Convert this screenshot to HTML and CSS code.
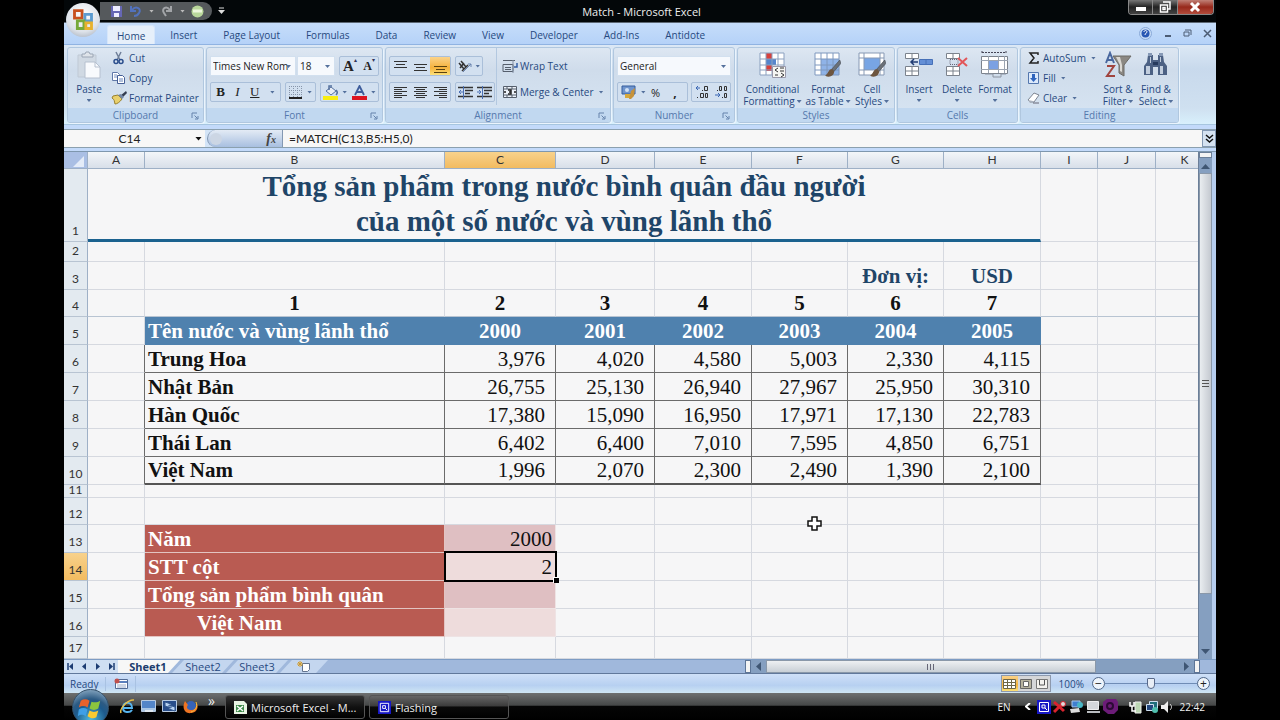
FILE: index.html
```html
<!DOCTYPE html>
<html lang="vi">
<head>
<meta charset="utf-8">
<title>Match - Microsoft Excel</title>
<link rel="stylesheet" href="styles.css">
</head>
<body>
<svg class="defs" aria-hidden="true">
  <defs>
    <symbol id="launch" viewBox="0 0 8 8"><path d="M1 6V1h5M3.500 3.500l3 3M7 4v3H4" fill="none" stroke="#6482ab"/></symbol>
    <symbol id="brush" viewBox="0 0 14 16"><path d="M13 0L6 8l2 2 6-7z" fill="#6b7078" stroke="#4b4f57" stroke-width=".6"/><path d="M6 8c-3 0-3 4-6 6 4 2 8 0 8-4z" fill="#6d553f"/></symbol>
    <symbol id="flash" viewBox="0 0 14 14"><path d="M0 0h14v14H0z" fill="#1717c4"/><path d="M2.500 2.500h9v9h-9zM5 5h3v3H5zM8 8l2 2" fill="none" stroke="#fff"/></symbol>
  </defs>
</svg>
<div class="app">
  <header class="titlebar">
    <button class="office" aria-label="Office Button"><svg viewBox="0 0 36 36"><g fill="none" stroke-width="3"><path d="M9 8h8v8H9z" stroke="#c8511f"/><path d="M20 12h7v7h-7z" stroke="#5b9bd0"/><path d="M12 19h7v8h-7z" stroke="#76a93a"/><path d="M21 21h6v6h-6z" stroke="#e7b12d"/></g></svg></button>
    <div class="qat">
      <button aria-label="Save"><svg width="13" height="13"><path d="M1 1h11v11H1z" fill="#6667b4"/><path d="M3 1h7v5H3zM4 8h5v4H4z" fill="#eef"/></svg></button>
      <button aria-label="Undo"><svg width="14" height="13"><path d="M2 1v5h5M3 5c4-5 10-1 7 3-1 2-3 3-5 3" fill="none" stroke="#5272bd" stroke-width="2"/></svg></button>
      <i class="caret pale"></i>
      <button aria-label="Redo"><svg width="14" height="13"><path d="M11 1v5H6M10 5C6 0 1 4 4 8l2 3" fill="none" stroke="#a2a5a8" stroke-width="2"/></svg></button>
      <i class="caret pale"></i>
      <button aria-label="Record"><svg width="13" height="13"><circle cx="6.500" cy="6.500" r="6" fill="#b9d79b"/><path d="M2 6h9" stroke="#edf7dc" stroke-width="3"/></svg></button>
    </div>
    <button class="more" aria-label="Customize"><svg width="7" height="8"><path d="M1 1h5" stroke="#ddd"/><path d="M0 3h7L3.500 7z" fill="#ddd"/></svg></button>
    <h1>Match - Microsoft Excel</h1>
    <div class="winbtns">
      <button aria-label="Minimize"><svg width="12" height="12"><path d="M1 6h10v4H1z" fill="#fff"/></svg></button>
      <button aria-label="Restore"><svg width="12" height="12"><path d="M4 1h7v7H9M1.500 4h7v7h-7zM4 6.500h2v2H4z" fill="none" stroke="#fff" stroke-width="1.500"/></svg></button>
      <button class="close" aria-label="Close"><svg width="12" height="12"><path d="M2 2l8 8M10 2l-8 8" stroke="#fff" stroke-width="3"/></svg></button>
    </div>
  </header>

  <nav class="tabs">
    <button class="tab on">Home</button><button class="tab">Insert</button><button class="tab">Page Layout</button><button class="tab">Formulas</button><button class="tab">Data</button><button class="tab">Review</button><button class="tab">View</button><button class="tab">Developer</button><button class="tab">Add-Ins</button><button class="tab">Antidote</button>
    <span class="docbtns">
      <button aria-label="Help"><svg width="13" height="13"><circle cx="6.500" cy="6.500" r="6" fill="#c9ddf6" stroke="#89a9d8"/><circle cx="6.500" cy="6.500" r="4" fill="#2a58b4"/><path d="M5 5c0-2 3-2 3 0 0 1-2 1-2 3" fill="none" stroke="#fff"/></svg></button>
      <button aria-label="Minimize workbook"><svg width="9" height="9"><path d="M2 7h6" stroke="#4c5c74" stroke-width="2"/></svg></button>
      <button aria-label="Restore workbook"><svg width="9" height="9"><path d="M2 1h6v5M1 3h5v4H1z" fill="none" stroke="#4c5c74"/></svg></button>
      <button aria-label="Close workbook"><svg width="9" height="9"><path d="M1 1l7 7M8 1L1 8" stroke="#4c5c74" stroke-width="1.500"/></svg></button>
    </span>
  </nav>

  <div class="ribbon">
    <section class="group clipboard">
      <div class="gbody">
        <button class="big"><svg width="28" height="28"><path d="M3 4h18v22H3z" fill="#d0d9e3" stroke="#bfc9d5"/><path d="M7 3h3l1-2h3l1 2h3v3H7z" fill="#dfe4ea" stroke="#9ba6b5"/><path d="M10 11h10l5 5v11H10z" fill="#f8fafd" stroke="#b6c0cf"/><path d="M20 11v5h5" fill="none" stroke="#b6c0cf"/></svg><span>Paste</span><i class="caret"></i></button>
        <div class="stack">
          <button class="small"><svg width="16" height="14"><path d="M5 1l4 8M10 1L6 9" stroke="#6f7f99" stroke-width="1.500"/><circle cx="5" cy="10.500" r="2" fill="none" stroke="#2c4f8d" stroke-width="1.500"/><circle cx="10" cy="10.500" r="2" fill="none" stroke="#2c4f8d" stroke-width="1.500"/></svg>Cut</button>
          <button class="small"><svg width="16" height="14"><path d="M1.500 1.500h5l2 2v6h-7z" fill="#fff" stroke="#6078a8"/><path d="M3 4h3M3 6h3" stroke="#7c94c0"/><path d="M6.500 4.500h5l2 2v6h-7z" fill="#fff" stroke="#455f96"/><path d="M8 8h4M8 10h4" stroke="#6683b8"/></svg>Copy</button>
          <button class="small"><svg width="16" height="14"><path d="M15 0L9 5l2 2 5-5z" fill="#333c50"/><path d="M2 5l5-1 4 4c-2 3-5 5-7 5-1-3 0-4-3-6z" fill="#e9d06c" stroke="#98802f"/><path d="M7 4l4 4 2-2-3-3z" fill="#7286a5"/></svg>Format Painter</button>
        </div>
      </div>
      <h2>Clipboard<svg class="launch" width="8" height="8"><use href="#launch"/></svg></h2>
    </section>

    <section class="group font">
      <div class="gbody rows">
        <div class="row">
          <span class="joined">
            <label class="combo fname"><select aria-label="Font"><option>Times New Rom</option></select><i class="caret"></i></label>
            <label class="combo fsize"><select aria-label="Font size"><option>18</option></select><i class="caret"></i></label>
          </span>
          <span class="set two"><button class="serif" aria-label="Grow font"><b class="g1">A</b><sup>▴</sup></button><button class="serif" aria-label="Shrink font"><b class="g2">A</b><sup>▾</sup></button></span>
        </div>
        <div class="row">
          <span class="set biu"><button class="serif"><b>B</b></button><button class="serif"><em>I</em></button><button class="serif"><u>U</u></button><i class="caret"></i></span>
          <span class="set bord"><button aria-label="Borders"><svg width="13" height="13"><path d="M.5 0v11M4.500 0v11M8.500 0v11M12.500 0v11M0 .5h13M0 4.500h13M0 8.500h13" stroke="#8795aa" stroke-dasharray="1 1"/><path d="M0 12h13" stroke="#222" stroke-width="2"/></svg></button><i class="caret"></i></span>
          <span class="set cols"><button aria-label="Fill color"><svg width="15" height="15"><path d="M3 6l5-4 5 4-5 4z" fill="#e8edf5" stroke="#56729f"/><path d="M6 5V1h3M13 5c2 2 1 4 0 5" fill="none" stroke="#56729f" stroke-width="1.500"/><path d="M0 11h15v4H0z" fill="#f9ee11"/></svg></button><i class="caret"></i><button aria-label="Font color"><svg width="15" height="15"><path d="M3 10L7.500 1 12 10M5 7h5" fill="none" stroke="#3d5c9b" stroke-width="1.800"/><path d="M0 11h15v4H0z" fill="#dd1420"/></svg></button><i class="caret"></i></span>
        </div>
      </div>
      <h2>Font<svg class="launch" width="8" height="8"><use href="#launch"/></svg></h2>
    </section>

    <section class="group align">
      <div class="gbody">
        <div class="rows left">
          <div class="row">
            <span class="set three"><button aria-label="Top align"><svg width="13" height="14"><path d="M0 2.500h13M2 5.500h9M0 8.500h13" stroke="#333"/></svg></button><button aria-label="Middle align"><svg width="13" height="14"><path d="M0 5.500h13M2 8.500h9M0 11.500h13" stroke="#333"/></svg></button><button class="lit" aria-label="Bottom align"><svg width="13" height="14"><path d="M0 7.500h13M2 10.500h9M0 13.500h13" stroke="#5b430f"/></svg></button></span>
            <span class="set ori"><button aria-label="Orientation"><svg width="14" height="13"><path d="M1 3l5 6M3 1l5 6M2 8l4-5M4 11l6-6" stroke="#333" stroke-width="1.500"/><path d="M5 12l8-8M10 4h3v3" fill="none" stroke="#6a84af"/></svg></button><i class="caret"></i></span>
          </div>
          <div class="row">
            <span class="set three"><button aria-label="Align left"><svg width="13" height="12"><path d="M0 1.500h13M0 3.500h8M0 5.500h13M0 7.500h8M0 9.500h13M0 11.500h8" stroke="#333"/></svg></button><button aria-label="Center"><svg width="13" height="12"><path d="M0 1.500h13M2 3.500h9M0 5.500h13M2 7.500h9M0 9.500h13M2 11.500h9" stroke="#333"/></svg></button><button aria-label="Align right"><svg width="13" height="12"><path d="M0 1.500h13M5 3.500h8M0 5.500h13M5 7.500h8M0 9.500h13M5 11.500h8" stroke="#333"/></svg></button></span>
            <span class="set dent"><button aria-label="Decrease indent"><svg width="15" height="13"><path d="M0 1.500h15M7 4.500h8M7 7.500h5M0 10.500h15" stroke="#333" stroke-width="1.500"/><path d="M5 6H1M3 4L1 6l2 2M5.500 0v13" fill="none" stroke="#4b70b4"/></svg></button><button aria-label="Increase indent"><svg width="15" height="13"><path d="M0 1.500h15M7 4.500h8M7 7.500h5M0 10.500h15" stroke="#333" stroke-width="1.500"/><path d="M0 6h4M2 4l2 2-2 2M5.500 0v13" fill="none" stroke="#4b70b4"/></svg></button></span>
          </div>
        </div>
        <div class="rows right">
          <button class="small"><svg width="16" height="14"><path d="M1 1.500h12M1 5.500h10v7H1zM3 8.500h6M3 10.500h6" fill="none" stroke="#555e6c"/><path d="M11 1v13" stroke="#8390a5"/><path d="M15 4v4h-3" fill="none" stroke="#335fa8" stroke-width="1.500"/></svg>Wrap Text</button>
          <button class="small"><svg width="16" height="14"><path d="M1.500 1.500h13v11h-13zM1 4h14M1 10h14M5 1v3M10 1v3M5 10v3M10 10v3" fill="#eef3fa" stroke="#555e6c"/><path d="M2 7h2M12 7h2M6 5h3v4H6M7 7h2" fill="none" stroke="#222" stroke-width="1.500"/></svg>Merge &amp; Center<i class="caret"></i></button>
        </div>
      </div>
      <h2>Alignment<svg class="launch" width="8" height="8"><use href="#launch"/></svg></h2>
    </section>

    <section class="group number">
      <div class="gbody rows">
        <div class="row"><label class="combo fmt"><select aria-label="Number format"><option>General</option></select><i class="caret"></i></label></div>
        <div class="row">
          <span class="set cur"><button aria-label="Accounting format"><svg width="15" height="14"><path d="M1 1h13v8H1z" fill="#6f94cc" stroke="#355d9d"/><circle cx="6" cy="5" r="2" fill="#cfe0f6"/><path d="M4 9h6v4H4z" fill="#d7a93c"/><path d="M10 6l4-3-1 8-3 3H8z" fill="#c6923a"/></svg></button><i class="caret"></i><button class="pct">%</button><button class="comma">,</button></span>
          <span class="set dec"><button aria-label="Increase decimal"><svg width="14" height="14"><path d="M5 3H1M3 1L1 3l2 2" fill="none" stroke="#3a67b4"/><path d="M9.500 1.500h3v4h-3zM5.500 8.500h3v4h-3zM10.500 8.500h2v4h-2zM7 5.500h1M2 12.500h1" fill="none" stroke="#333"/></svg></button><button aria-label="Decrease decimal"><svg width="14" height="14"><path d="M1 10h5M4 8l2 2-2 2" fill="none" stroke="#3a67b4"/><path d="M5.500 1.500h2v4h-2zM10.500 1.500h2v4h-2zM10.500 8.500h2v4h-2zM3 5.500h1M8 12.500h1" fill="none" stroke="#333"/></svg></button></span>
        </div>
      </div>
      <h2>Number<svg class="launch" width="8" height="8"><use href="#launch"/></svg></h2>
    </section>

    <section class="group styles">
      <div class="gbody">
        <button class="big wide"><svg width="28" height="28"><path d="M1 2h24v22H1z" fill="#fff"/><path d="M7 2h6v6H7zM7 14h6v6H7z" fill="#d8403c"/><path d="M7 8h10v6H7z" fill="#5585cc"/><path d="M1 2h24v22H1zM1 8h24M1 14h24M1 19h24M7 2v22M13 2v22M19 2v22" fill="none" stroke="#8ba0bf"/><path d="M13.500 15.500h13v11h-13z" fill="#f6f6f3" stroke="#99a"/><path d="M19 17l-3 2 3 2M21 17h4M21 20h4M16 24h3M22 22l3 2-3 2" fill="none" stroke="#333"/></svg><span>Conditional<br>Formatting<i class="caret"></i></span></button>
        <button class="big mid"><svg width="28" height="28"><path d="M1 2h24v22H1z" fill="#fff"/><path d="M7 8h18v16H7z" fill="#8fb3e8"/><path d="M1 2h24v22H1zM1 8h24M1 14h24M1 19h24M7 2v22M13 2v22M19 2v22" fill="none" stroke="#7f98be"/><use href="#brush" x="11" y="9" width="16" height="18"/></svg><span>Format<br>as Table<i class="caret"></i></span></button>
        <button class="big"><svg width="28" height="28"><path d="M1 2h25v22H1z" fill="#fff"/><path d="M6 7h16v12H6z" fill="#78a5e4"/><path d="M1 2h25v22H1zM1 7h25M1 19h25M6 2v22M22 2v22" fill="none" stroke="#8799b4"/><use href="#brush" x="12" y="9" width="16" height="18"/></svg><span>Cell<br>Styles<i class="caret"></i></span></button>
      </div>
      <h2>Styles</h2>
    </section>

    <section class="group cells">
      <div class="gbody">
        <button class="big"><svg width="28" height="28"><path d="M.5 2.500h13v5H.5zM.5 15.500h13v9H.5zM7 2v5M7 15v9M0 20h14" fill="#fff" stroke="#7b828c"/><path d="M14.500 8.500h13v5h-13zM21 8v6" fill="#648fd6" stroke="#4670b8"/><path d="M13 11H6M9 8l-3 3 3 3" fill="none" stroke="#223d74" stroke-width="1.500"/></svg><span>Insert</span><i class="caret"></i></button>
        <button class="big"><svg width="28" height="28"><path d="M3.500 2.500h13v5h-13zM3.500 15.500h13v9h-13zM10 2v5M10 15v9M3 20h14" fill="#fff" stroke="#7b828c"/><path d="M7 8.500h8v5H7z" fill="none" stroke="#667" stroke-dasharray="1 1"/><path d="M15 7l9 8M24 7l-9 8" stroke="#e2575a" stroke-width="2"/></svg><span>Delete</span><i class="caret"></i></button>
        <button class="big"><svg width="28" height="28"><path d="M1 1.500h24M1 0v3M25 0v3" stroke="#445" stroke-dasharray="2 1"/><path d="M.5 5.500h26v17H.500z" fill="#fff" stroke="#7b828c"/><path d="M8 10h9v8H8z" fill="#7ba1e2"/><path d="M0 9.500h27M0 18.500h27M7.500 5v17M17.500 5v17M23.500 5v17" stroke="#9aa3b0"/><path d="M4 23h8v3h8v-3h5" fill="none" stroke="#8a929f"/></svg><span>Format</span><i class="caret"></i></button>
      </div>
      <h2>Cells</h2>
    </section>

    <section class="group editing">
      <div class="gbody">
        <div class="stack">
          <button class="small"><svg width="14" height="14"><path d="M11 4V2H3l4 5-4 5h8v-2" fill="none" stroke="#222" stroke-width="1.500"/></svg>AutoSum<i class="caret"></i></button>
          <button class="small"><svg width="14" height="14"><path d="M1.500 1.500h10v11h-10z" fill="#dce9fb" stroke="#5477ae"/><path d="M5 3h3v4h2l-3.500 4L3 7h2z" fill="#2f64bd"/></svg>Fill<i class="caret"></i></button>
          <button class="small"><svg width="14" height="14"><path d="M1 9l6-7 5 2-5 7H3z" fill="#fff" stroke="#7d8592"/><path d="M1 9l5 1 1 1-4 1z" fill="#aab2be"/><path d="M6 12h6" stroke="#667"/></svg>Clear<i class="caret"></i></button>
        </div>
        <button class="big"><svg width="28" height="28"><path d="M2 12L6 2l4 10M4 9h5" fill="none" stroke="#49679e" stroke-width="2"/><path d="M3 15h7l-7 10h8" fill="none" stroke="#a0443f" stroke-width="2"/><path d="M9 5h18l-7 9v11l-5-3v-8z" fill="#8b8883" stroke="#6c6a66"/><path d="M12 6h4l2 8v7l-2-1v-6z" fill="#d9d7d2"/></svg><span>Sort &amp;<br>Filter<i class="caret"></i></span></button>
        <button class="big"><svg width="28" height="28"><path d="M6 4h5v5h5V4h5l1 7 3 4v9h-9v-8h-5v8H2v-9l3-4z" fill="#4c6184"/><path d="M6 2h4v3H6zM17 2h4v3h-4z" fill="#8699b6"/><path d="M4 15h4v8H4zM18 15h3v8h-3zM8 6h1v6H8zM18 6h1v5h-1z" fill="#c2cede"/><path d="M11 11h5v3h-5z" fill="#263a5d"/></svg><span>Find &amp;<br>Select<i class="caret"></i></span></button>
      </div>
      <h2>Editing</h2>
    </section>
  </div>

  <div class="fbar">
    <span class="namebox"><input aria-label="Name box" value="C14"><i class="caret dark"></i></span>
    <span class="fxwrap"><button class="fx" aria-label="Insert function"><i class="knob"></i><em>f<small>x</small></em></button></span>
    <input class="formula" aria-label="Formula" value="=MATCH(C13,B5:H5,0)">
    <button class="expand" aria-label="Expand formula bar"><svg width="9" height="10"><path d="M1 1l3.500 3L8 1M1 5l3.500 3L8 5" fill="none" stroke="#111" stroke-width="1.500"/></svg></button>
  </div>

  <main class="work">
    <div class="sheet">
      <table>
        <colgroup><col class="ch"><col class="ca"><col class="cb"><col class="cc"><col class="cd"><col class="ce"><col class="cf"><col class="cf"><col class="ce"><col class="ca"><col class="cj"><col class="cj"></colgroup>
        <thead><tr><th class="corner"><svg width="22" height="16"><path d="M20 4v11H9z" fill="#e4ecf8"/></svg></th><th>A</th><th>B</th><th class="sel">C</th><th>D</th><th>E</th><th>F</th><th>G</th><th>H</th><th>I</th><th>J</th><th>K</th></tr></thead>
        <tbody>
          <tr class="r1"><th>1</th><td colspan="8" class="title">Tổng sản phẩm trong nước bình quân đầu người<br>của một số nước và vùng lãnh thổ</td><td></td><td></td><td></td></tr>
          <tr class="r2"><th>2</th><td></td><td></td><td></td><td></td><td></td><td></td><td></td><td></td><td></td><td></td><td></td></tr>
          <tr class="unit"><th>3</th><td></td><td></td><td></td><td></td><td></td><td></td><td>Đơn vị:</td><td>USD</td><td></td><td></td><td></td></tr>
          <tr class="idx"><th>4</th><td></td><td>1</td><td>2</td><td>3</td><td>4</td><td>5</td><td>6</td><td>7</td><td></td><td></td><td></td></tr>
          <tr class="head"><th>5</th><td></td><td class="h name">Tên nước và vùng lãnh thổ</td><td class="h">2000</td><td class="h">2001</td><td class="h">2002</td><td class="h">2003</td><td class="h">2004</td><td class="h">2005</td><td></td><td></td><td></td></tr>
          <tr><th>6</th><td class="edge"></td><td class="d name">Trung Hoa</td><td class="d">3,976</td><td class="d">4,020</td><td class="d">4,580</td><td class="d">5,003</td><td class="d">2,330</td><td class="d">4,115</td><td></td><td></td><td></td></tr>
          <tr><th>7</th><td class="edge"></td><td class="d name">Nhật Bản</td><td class="d">26,755</td><td class="d">25,130</td><td class="d">26,940</td><td class="d">27,967</td><td class="d">25,950</td><td class="d">30,310</td><td></td><td></td><td></td></tr>
          <tr><th>8</th><td class="edge"></td><td class="d name">Hàn Quốc</td><td class="d">17,380</td><td class="d">15,090</td><td class="d">16,950</td><td class="d">17,971</td><td class="d">17,130</td><td class="d">22,783</td><td></td><td></td><td></td></tr>
          <tr><th>9</th><td class="edge"></td><td class="d name">Thái Lan</td><td class="d">6,402</td><td class="d">6,400</td><td class="d">7,010</td><td class="d">7,595</td><td class="d">4,850</td><td class="d">6,751</td><td></td><td></td><td></td></tr>
          <tr class="last"><th>10</th><td class="edge"></td><td class="d name">Việt Nam</td><td class="d">1,996</td><td class="d">2,070</td><td class="d">2,300</td><td class="d">2,490</td><td class="d">1,390</td><td class="d">2,100</td><td></td><td></td><td></td></tr>
          <tr class="r11"><th>11</th><td></td><td></td><td></td><td></td><td></td><td></td><td></td><td></td><td></td><td></td><td></td></tr>
          <tr class="r12"><th>12</th><td></td><td></td><td></td><td></td><td></td><td></td><td></td><td></td><td></td><td></td><td></td></tr>
          <tr><th>13</th><td></td><td class="q">Năm</td><td class="p dk">2000</td><td></td><td></td><td></td><td></td><td></td><td></td><td></td><td></td></tr>
          <tr><th class="sel">14</th><td></td><td class="q">STT cột</td><td class="p active">2</td><td></td><td></td><td></td><td></td><td></td><td></td><td></td><td></td></tr>
          <tr><th>15</th><td></td><td class="q">Tổng sản phẩm bình quân</td><td class="p dk"></td><td></td><td></td><td></td><td></td><td></td><td></td><td></td><td></td></tr>
          <tr><th>16</th><td></td><td class="q indent">Việt Nam</td><td class="p"></td><td></td><td></td><td></td><td></td><td></td><td></td><td></td><td></td></tr>
          <tr class="r17"><th>17</th><td></td><td></td><td></td><td></td><td></td><td></td><td></td><td></td><td></td><td></td><td></td></tr>
        </tbody>
      </table>
      <svg class="pointer" width="15" height="15" viewBox="0 0 15 15"><path d="M5 1h5v4h4v5h-4v4H5v-4H1V5h4z" fill="#fff" stroke="#111" stroke-width="1.500"/></svg>
    </div>
    <div class="vscroll">
      <i class="split"></i>
      <button aria-label="Scroll up"><svg width="9" height="6"><path d="M0 6l4.500-5L9 6z" fill="#3f5673"/></svg></button>
      <i class="thumb"></i>
      <i class="track"></i>
      <button aria-label="Scroll down"><svg width="9" height="6"><path d="M0 0l4.500 5L9 0z" fill="#3f5673"/></svg></button>
    </div>
  </main>

  <div class="sheetbar">
    <div class="sheets">
      <div class="nav">
        <button aria-label="First sheet"><svg width="7" height="7"><path d="M1 0v7" stroke="#1d3c73" stroke-width="1.500"/><path d="M6 0v7L2 3.500z" fill="#1d3c73"/></svg></button>
        <button aria-label="Previous sheet"><svg width="7" height="7"><path d="M5 0v7L1 3.500z" fill="#1d3c73"/></svg></button>
        <button aria-label="Next sheet"><svg width="7" height="7"><path d="M2 0v7l4-3.500z" fill="#1d3c73"/></svg></button>
        <button aria-label="Last sheet"><svg width="7" height="7"><path d="M6 0v7" stroke="#1d3c73" stroke-width="1.500"/><path d="M1 0v7l4-3.500z" fill="#1d3c73"/></svg></button>
      </div>
      <button class="stab on">Sheet1</button><button class="stab">Sheet2</button><button class="stab">Sheet3</button><button class="stab new" aria-label="Insert worksheet"><svg width="14" height="11"><path d="M5.500 2.500h7v6l-2 2h-5z" fill="#fff" stroke="#64748e"/><path d="M3 0v6M0 3h6M1 1l4 4M5 1L1 5" stroke="#d09a2a"/></svg></button>
    </div>
    <div class="hscroll">
      <i class="hsplit"></i>
      <button aria-label="Scroll left"><svg width="6" height="9"><path d="M6 0v9L1 4.500z" fill="#3f5673"/></svg></button>
      <i class="hthumb"></i>
      <i class="htrack"></i>
      <button aria-label="Scroll right"><svg width="6" height="9"><path d="M0 0v9l5-4.500z" fill="#3f5673"/></svg></button>
      <i class="hsplit"></i>
    </div>
  </div>

  <footer class="status">
    <span class="ready">Ready</span>
    <button class="macro" aria-label="Record macro"><svg width="14" height="12"><path d="M1.500 1.500h12v9h-12z" fill="#fff" stroke="#536b95"/><path d="M2 4h11" stroke="#5c80bd" stroke-width="2"/><path d="M3 7h9M3 9h9" stroke="#9aaccb"/><circle cx="3" cy="3" r="2.500" fill="#c0504d"/></svg></button>
    <div class="views">
      <button class="lit" aria-label="Normal"><svg width="13" height="10"><path d="M.5.5h12v9H.500zM0 3.500h13M0 6.500h13M4.500 0v10M8.500 0v10" fill="#fff" stroke="#6e6748"/></svg></button>
      <button aria-label="Page layout"><svg width="12" height="10"><path d="M.5.500h11v9H.500z" fill="#b7b39f" stroke="#666"/><path d="M3.500 2.500h5v5h-5z" fill="#fff" stroke="#666"/></svg></button>
      <button aria-label="Page break preview"><svg width="12" height="10"><path d="M.5.500h11v9H.500z" fill="#f4f2ee" stroke="#777"/><path d="M3.500 1v5M8.500 1v5h-5" fill="none" stroke="#555"/></svg></button>
    </div>
    <button class="zoomtext">100%</button>
    <button class="round" aria-label="Zoom out">−</button>
    <input class="zoom" type="range" min="0" max="200" value="100" aria-label="Zoom">
    <button class="round" aria-label="Zoom in">+</button>
  </footer>

  <div class="taskbar">
    <button class="start" aria-label="Start"><svg viewBox="0 0 38 38"><path d="M9 12c3-2 6-2 9 0l-2 7c-3-2-6-2-9 0z" fill="#e8622c"/><path d="M20 13c3 1 6 1 9-1l-2 8c-3 2-6 2-9 0z" fill="#8cc63e"/><path d="M7 21c3-2 6-2 9 0l-2 7c-3-2-5-2-8 0z" fill="#3f9fe6"/><path d="M18 22c3 2 6 2 9 0l-2 7c-3 2-6 1-9-1z" fill="#fbcb32"/></svg></button>
    <div class="quick">
      <button aria-label="Internet Explorer"><svg width="15" height="15"><path d="M3 9h9c0-7-9-7-9 0 0 5 7 5 9 2" fill="none" stroke="#57b4ee" stroke-width="2"/><path d="M1 14C-1 9 9 0 14 1" fill="none" stroke="#e6bd45" stroke-width="1.500"/></svg></button>
      <button aria-label="Show desktop"><svg width="15" height="13"><path d="M.5.500h14v11H.500z" fill="#5385c8" stroke="#b8cae0"/><path d="M1 8h13v3H1z" fill="#a8c5e4"/><path d="M4 10h8v2H4z" fill="#dfe7f0"/></svg></button>
      <button aria-label="Switch windows"><svg width="15" height="13"><path d="M.5.500h14v11H.500z" fill="#284d8a" stroke="#b8cae0"/><path d="M3 2l6 2v4L3 6zM7 5l6 2v4L7 9z" fill="#b9d3f3" stroke="#34598e"/></svg></button>
      <button aria-label="Firefox"><svg width="15" height="15"><circle cx="8" cy="7" r="5" fill="#3763b8"/><path d="M2 2c-4 8 1 13 6 12 7 0 8-8 5-11 1 5-1 8-5 8-4 0-5-3-3-5z" fill="#ee7423"/><path d="M13 3c2 5-1 9-5 10" fill="none" stroke="#f9c33b"/></svg></button>
      <span class="chev">»</span>
    </div>
    <button class="task on"><svg width="13" height="13"><path d="M0 0h10l3 3v10H0z" fill="#e9f4e4"/><path d="M2 4h8v7H2z" fill="#3d8a49"/><path d="M3 5l6 5M9 5l-6 5" stroke="#fff" stroke-width="1.500"/></svg>Microsoft Excel - M...</button>
    <button class="task"><svg width="13" height="13"><use href="#flash"/></svg>Flashing</button>
    <div class="tray">
      <span class="lang">EN</span>
      <button aria-label="Show hidden icons"><svg width="6" height="7"><path d="M5 0L1 3.500 5 7" fill="none" stroke="#fff" stroke-width="2"/></svg></button>
      <svg width="14" height="14"><use href="#flash"/></svg>
      <svg width="14" height="14"><path d="M1 2l10 9M1 12l9-9" stroke="#d9232e" stroke-width="3"/><circle cx="10" cy="4" r="2.500" fill="#ddd" stroke="#d9232e"/></svg>
      <svg width="15" height="14"><path d="M3 1h8v6H3z" fill="#3f7fd0" stroke="#a8c8ee"/><path d="M1 9l9-1 1 4-9 1z" fill="#ddd"/><circle cx="11" cy="5" r="3" fill="#49b7c5"/></svg>
      <svg width="15" height="14"><path d="M1.500 1.500h11v8h-11z" fill="#d4d7da" stroke="#eee"/><path d="M1 11h13v2H1z" fill="#b9bcc0"/></svg>
      <svg width="15" height="15"><path d="M0 3l4-3h9l2 3v8l-4 4H5l-5-4z" fill="#6c1c78"/><circle cx="7" cy="7" r="3" fill="none" stroke="#2b0a34" stroke-width="2"/></svg>
      <svg class="gap" width="14" height="14"><path d="M6 2h6v11H6z" fill="#bcd7b4" stroke="#eee"/><path d="M1 2v4h4V2M3 6v5h4" fill="none" stroke="#fff" stroke-width="1.500"/></svg>
      <svg width="14" height="14"><path d="M4.500 1.500h8v7h-8z" fill="#1f6d7a" stroke="#cde"/><path d="M1.500 4.500h7v6h-7z" fill="#23487f" stroke="#cde"/><circle cx="10" cy="10" r="3" fill="#4fbfae"/></svg>
      <svg width="12" height="14"><path d="M0 5h3l4-4v12L3 9H0z" fill="#eee"/><path d="M9 4c2 2 2 4 0 6" fill="none" stroke="#ddd"/></svg>
      <time>22:42</time>
    </div>
  </div>
</div>
</body>
</html>
```
FILE: styles.css
```css
*{box-sizing:border-box}
body{margin:0;background:#000;font-family:"Open Sans","Noto Sans",sans-serif;font-size:11px;color:#27497f}
button,input,select{font:inherit;color:inherit;margin:0;padding:0;border:0;background:none;border-radius:0}
button{display:flex;align-items:center;justify-content:center;white-space:nowrap}
svg{display:block;flex:none}
.defs{position:absolute;width:0;height:0}
.app{display:flex;flex-direction:column;height:100vh;margin:0 5%;background:#c3dafa;position:relative;overflow:hidden}
.caret{display:inline-block;flex:none;width:5px;height:3px;background:#54709c;clip-path:polygon(0 0,100% 0,50% 100%)}
.caret.pale{background:#bbb}
.caret.dark{width:7px;height:4px;background:#111}

.titlebar{display:flex;height:23px;flex:none;background:#030709;border-bottom:1px solid #5d6874;position:relative}
.office{position:absolute;left:2px;top:3px;width:34px;height:34px;border-radius:50%;background:radial-gradient(circle at 50% 35%,#fff,#dde2e9 60%,#97a1b0);z-index:2}
.office svg{width:34px;height:34px}
.qat{display:flex;align-items:center;gap:6px;margin:2px 0 2px 36px;padding:0 10px;width:112px;border-radius:0 9px 9px 0;background:#55595c}
.more{margin-left:5px;width:8px}
h1{flex:1;margin:0;font-size:11px;font-weight:400;line-height:24px;color:#eee;text-align:center;padding-right:42px}
.winbtns{display:flex;width:86px;height:15px;border:1px solid #888;border-top:0;border-radius:0 0 4px 4px;overflow:hidden;margin:0 2px 0 28px}
.winbtns button{flex:2;background:linear-gradient(#777,#222 50%,#444);border-right:1px solid #888}
.winbtns .close{flex:3;background:linear-gradient(#c08076,#97281b 50%,#b34c3c);border:0}

.tabs{display:flex;height:21px;flex:none;padding-left:43px;background:linear-gradient(#c6ddfa,#b5d2f8);font-size:10px}
.tab{padding:3px 13px 0}
.tab.on{padding:1px 9px 0;margin:2px 2px 0 0;background:#e6effa;border-radius:3px 3px 0 0;border:1px solid #d6e6fb;border-bottom:0}
.docbtns{display:flex;gap:11px;margin-left:auto;padding-right:4px}

.ribbon{display:flex;flex:none;gap:2px;padding:2px 3px 1px;height:81px;border-top:1px solid #90b3e2;border-bottom:1px solid #a7c6df;background:linear-gradient(#dce8f5,#c8d9ec 30%,#cfe0f0 80%,#d8f0fc);font-size:10px}
.group{display:flex;flex-direction:column;flex:none;border:1px solid #b0c7df;border-radius:3px;overflow:hidden;background:linear-gradient(#dde7f2,#cfdceb 30%,#d7e5f3);box-shadow:1px 1px 0 #eaf4fd}
.group h2{position:relative;flex:none;margin:0;height:14px;line-height:14px;text-align:center;font-size:10px;font-weight:400;color:#5579ad;background:#c1d8f0}
.launch{position:absolute;right:4px;top:4px}
.gbody{display:flex;flex:1;min-height:0}
.clipboard{width:137px}.font{width:177px}.align{width:226px}.number{width:122px}.styles{width:158px}.cells{width:121px}.editing{width:159px}
.big{flex-direction:column;justify-content:flex-start;width:38px;padding-top:3px;line-height:12px;text-align:center}
.big svg{margin-bottom:4px}
.big>.caret{margin-top:4px}
.big span .caret{margin-left:2px;vertical-align:2px}
.big.wide{width:61px}.big.mid{width:50px}
.clipboard .big{margin-left:2px}
.styles .gbody{padding-left:4px}
.cells .gbody{padding-left:2px}
.stack{display:flex;flex-direction:column;width:72px}
.clipboard .stack{margin-left:3px;width:86px}
.editing .stack{margin-left:6px}
.small{height:20px;gap:2px;justify-content:flex-start}
.small .caret{margin-left:3px}
.rows{display:flex;flex-direction:column;gap:6px;padding:8px 3px 0}
.row{display:flex;height:20px;gap:4px}
.joined{display:flex;gap:1px}
.combo{position:relative;display:flex;background:#f6f9fd;border:1px solid #d2e0ef}
.combo select{appearance:none;width:100%;padding-left:2px;color:#222;outline:0}
.combo .caret{position:absolute;right:4px;top:8px}
.fname{width:86px}.fsize{width:38px}.fmt{width:115px}
.set{display:flex;align-items:center;justify-content:space-around;border:1px solid #aabfd9;border-radius:2px;background:#d2e0f0}
.set button{height:18px}
.serif{font-family:"Liberation Serif",serif;font-size:13px;color:#222}
.serif sup{font-size:6px;line-height:6px;align-self:flex-start;color:#335}
.g1{font-size:15px}.g2{font-size:12px}
.two{width:40px}.biu{width:72px}.bord{width:31px}.cols{width:60px}
.three{width:62px}.ori{width:28px}.dent{width:40px}.cur{width:72px}.dec{width:40px}
.three button{flex:1}
.number .row{gap:3px}
.lit{background:linear-gradient(#fbd38a,#f5b23c 60%,#fde27a)}
.align .left{width:111px;padding-right:0;border-right:1px solid #b3c8e0;margin-bottom:3px}
.align .right{padding-left:5px}
.pct,.comma{color:#222}.pct{font-size:11px}.comma{font-size:12px;font-weight:700;padding:0 8px}

.fbar{display:flex;flex:none;height:19px;margin-top:4px;background:#d3e4f7;border-top:1px solid #8ba0ae;border-bottom:1px solid #8ba0ae;font-family:Lato,sans-serif;font-size:12px;color:#222}
.namebox{display:flex;align-items:center;width:141px;background:#f7f7f7;padding-right:3px}
.namebox input{flex:1;min-width:0;text-align:center;outline:0;padding-left:0}
.fxwrap{width:78px;padding-left:2px;border-right:1px solid #8398b3}
.fx{width:100%;height:100%;justify-content:space-between;padding-right:6px;border-radius:9px 0 0 9px;border-left:1px solid #8398b3;background:linear-gradient(#e3ebf5,#a8bfe0)}
.knob{width:12px;height:12px;margin-left:2px;border-radius:50%;background:#ccd6e4}
.fx em{font:italic 700 14px "Liberation Serif",serif;color:#444}
.fx small{font-size:10px}
.formula{flex:1;background:#f7f7f7;padding-left:6px;outline:0}
.expand{width:14px;background:#d5e2f1;border:1px solid #8398b3}

.work{display:flex;flex:1;min-height:0;margin-top:3px;border-top:1px solid #7e97ae}
.sheet{position:relative;flex:1;min-width:0;overflow:hidden;background:#f6f6f7}
table{table-layout:fixed;border-collapse:separate;border-spacing:0;width:1149px;font:21px/24px "Liberation Serif",serif;color:#111}
.ch{width:24px}.ca{width:57px}.cb{width:300px}.cc{width:111px}.cd{width:99px}.ce{width:97px}.cf{width:96px}.cj{width:58px}
th{font:12px/16px Lato,sans-serif;color:#333;padding:0}
thead th{height:17px;border-right:1px solid #9eb0c6;border-bottom:1px solid #9eb0c6;background:linear-gradient(#f3f6f9,#d8dfe9)}
thead .corner{background:#aabfe4}
tbody th{padding-bottom:2px;background:#e3eaf0;border-right:1px solid #9eb0c6;border-bottom:1px solid #b8c4d2;vertical-align:bottom;text-align:center}
th.sel,thead th.sel{background:linear-gradient(#f8d28c,#f2bb60)}
td{height:28px;padding:0 3px;border-right:1px solid #d6d9e0;border-bottom:1px solid #d6d9e0;white-space:nowrap}
.r1 td{height:73px}
.r1 .title{text-align:center;font-size:29px;line-height:35px;font-weight:700;color:#1f4568;border-bottom:3px solid #1b628f;padding:0}
.r2 td{height:20px}
.unit td{font-weight:700;color:#1f4568;text-align:center}
.idx td{height:27px;font-weight:700;text-align:center;line-height:22px}
.idx td,.idx th{border-bottom-color:#b8c4d2}
.h{background:#4f81ae;color:#fff;font-weight:700;text-align:center;border-color:#4f81ae}
.d{text-align:right;padding-right:10px;border-color:#6b6b6b}
.edge{border-right-color:#6b6b6b}
td.name{text-align:left;font-weight:700}
.last .d{border-bottom:2px solid #555}
.r11 th,.r11 td{height:13px;line-height:10px}
.r11 th{line-height:8px;padding-bottom:3px}
.r12 td{height:27px}
.q{background:#b95b52;color:#fff;font-weight:700;border-color:#e3c4c2}
.q.indent{padding-left:52px}
.p{text-align:right;background:#eedcdc;border-color:#eee3e4}
.p.dk{background:#dfbfc2}
.active{position:relative}
.active::before{content:"";position:absolute;inset:-2px -2px -2px -1px;border:2px solid #000}
.active::after{content:"";position:absolute;right:-4px;bottom:-3px;width:5px;height:5px;background:#000;border-top:1px solid #fff;border-left:1px solid #fff}
.r17 td{height:22px}
.pointer{position:absolute;left:743px;top:364px}

.vscroll{display:flex;flex-direction:column;width:18px;border-left:1px solid #6b7f99;border-right:4px solid #b5cdee;background:#859fc0}
.split{height:6px;background:#f4f4f4;border:1px solid #6b7f99}
.vscroll button{height:15px}
.thumb{flex:422;background:linear-gradient(#555,#555) 50% 50%/7px 1px no-repeat,linear-gradient(#555,#555) 50% calc(50% - 3px)/7px 1px no-repeat,linear-gradient(#555,#555) 50% calc(50% + 3px)/7px 1px no-repeat,linear-gradient(90deg,#e9edf0,#c4c9d0);border:1px solid #8a98a9}
.track{flex:50}

.sheetbar{display:flex;flex:none;height:15px;background:#a0b8dc;border-top:1px solid #7d9cc4;border-bottom:1px solid #61789b}
.sheets{display:flex;width:59.1%;font-size:11px}
.nav{display:flex;justify-content:space-around;width:54px;background:#cfdff3}
.stab{width:62px;margin-left:-8px;background:#c4d6ef;clip-path:polygon(12px 0,100% 0,calc(100% - 12px) 100%,0 100%);line-height:13px}
.stab.on{margin-left:0;background:#f7f7f7;clip-path:polygon(0 0,100% 0,calc(100% - 12px) 100%,0 100%);padding-right:2px;font-weight:700;color:#1d3c6e}
.stab.new{width:48px}
.hscroll{display:flex;flex:1;background:#859fc0;margin-right:16px}
.hscroll button{width:15px}
.hsplit{width:6px;border:1px solid #5d7597;background:#f4f4f4}
.hthumb{flex:325;background:repeating-linear-gradient(90deg,#667 0 1px,transparent 1px 3px) 50% 50%/8px 6px no-repeat,linear-gradient(#eef0f2,#c8cfd6);border:1px solid #8a98a9}
.htrack{flex:82}

.status{display:flex;flex:none;align-items:center;height:19px;background:linear-gradient(#cfe0f8,#b7d0f1 60%,#cfe6f4);font-size:10px}
.ready{width:42px;padding-left:6px;border-right:1px solid #a9c2e2}
.macro{width:30px;border-right:1px solid #a9c2e2;height:16px}
.views{display:flex;margin-left:auto;border:1px solid #8d99ad;background:#d5d6d8}
.views button{width:16px;height:15px}
.zoomtext{margin:0 8px}
.round{width:13px;height:13px;border:1px solid #4f6688;border-radius:50%;background:#eef4fb;font-size:12px;line-height:10px;color:#222}
.zoom{appearance:none;width:92px;height:12px;background:linear-gradient(#6f8cb5,#6f8cb5) 50% 50%/100% 1px no-repeat}
.zoom::-webkit-slider-thumb{appearance:none;width:8px;height:11px;background:#e8eef6;border:1px solid #58698a;border-radius:1px 1px 4px 4px}
.round:last-child{margin-right:6px}

.taskbar{position:relative;display:flex;flex:none;height:27px;padding-left:56px;background:linear-gradient(#6e7070,#464848 45%,#050505 50%,#000);color:#eee}
.start{position:absolute;left:8px;top:-4px;width:37px;height:37px;border-radius:50%;background:radial-gradient(circle at 50% 85%,#4fb9df,#1d5a8c 45%,#2c5a83 60%,#a9c4d8);border:1px solid #35516a}
.start svg{width:37px;height:37px}
.quick{display:flex;align-items:center;gap:6px;width:105px}
.chev{margin-left:4px;align-self:flex-start;font-size:14px;line-height:16px}
.task{justify-content:flex-start;gap:4px;width:140px;height:24px;margin:2px 4px 0 0;padding-left:8px;border:1px solid #555;border-radius:3px;background:linear-gradient(#666,#3c3c3c 45%,#0a0a0a 50%,#000)}
.task.on{background:linear-gradient(#333,#111 50%,#000)}
.tray{display:flex;align-items:center;gap:2px;margin-left:auto;padding-right:11px;font-size:10px}
.lang{margin-right:12px}
.tray button{margin-right:4px}
.gap{margin-left:9px}
time{margin-left:5px}
```
